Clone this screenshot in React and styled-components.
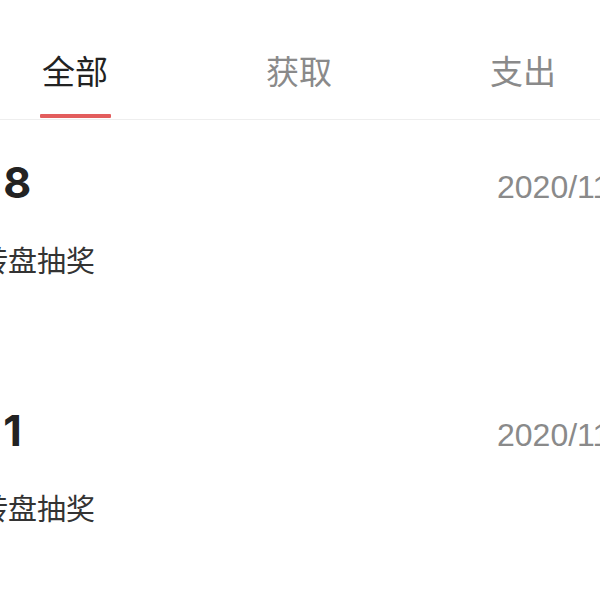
import React, { useState } from "react";
import styled, { createGlobalStyle } from "styled-components";

const GlobalStyle = createGlobalStyle`
  html, body { margin: 0; padding: 0; background: #fff; }
  body { font-family: "Noto Sans CJK SC", "Noto Sans", sans-serif; }
`;

const Viewport = styled.div`
  width: 600px;
  height: 600px;
  overflow: hidden;
  background: #fff;
`;

const Page = styled.div`
  width: 672px;
  margin-left: -37px;
`;

const TabBar = styled.div`
  display: flex;
  height: 119px;
  border-bottom: 1px solid #eeeeee;
`;

const Tab = styled.div`
  flex: 1;
  display: flex;
  flex-direction: column;
  align-items: center;
  padding-top: 54px;
  box-sizing: border-box;
  cursor: pointer;
`;

const TabLabel = styled.span`
  font-family: "Noto Sans CJK SC", sans-serif;
  font-size: 33px;
  line-height: 33px;
  color: ${(p) => (p.$active ? "#222222" : "#8a8a8a")};
`;

const Indicator = styled.span`
  margin-top: auto;
  margin-bottom: 1px;
  width: 71px;
  height: 4px;
  border-radius: 1px;
  background: ${(p) => (p.$active ? "#e35d5d" : "transparent")};
`;

const List = styled.div`
  display: flex;
  flex-direction: column;
`;

const Item = styled.div`
  display: flex;
  flex-direction: column;
  height: 248px;
  box-sizing: border-box;
  padding: 41px 0 0 11px;
`;

const TopLine = styled.div`
  display: flex;
  align-items: baseline;
`;

const Amount = styled.span`
  width: 523px;
  flex-shrink: 0;
  font-family: "Inter", "Liberation Sans", sans-serif;
  font-weight: 700;
  font-size: 43px;
  line-height: 43px;
  color: #222222;
`;

const DateText = styled.span`
  white-space: nowrap;
  font-family: "Liberation Sans", Arial, sans-serif;
  font-size: 32px;
  line-height: 32px;
  color: #8a8a8a;
`;

const Desc = styled.div`
  margin-top: 41px;
  font-family: "Noto Sans CJK SC", sans-serif;
  font-size: 29px;
  line-height: 29px;
  color: #333333;
  padding-left: 5px;
`;

const tabs = ["全部", "获取", "支出"];

const records = [
  { amount: "+8", date: "2020/11/20 10:23", desc: "转盘抽奖" },
  { amount: "+1", date: "2020/11/19 09:41", desc: "转盘抽奖" },
];

export default function App() {
  const [active, setActive] = useState(0);
  return (
    <>
      <GlobalStyle />
      <Viewport>
        <Page>
          <TabBar>
            {tabs.map((t, i) => (
              <Tab key={t} onClick={() => setActive(i)}>
                <TabLabel $active={i === active}>{t}</TabLabel>
                <Indicator $active={i === active} />
              </Tab>
            ))}
          </TabBar>
          <List>
            {records.map((r, i) => (
              <Item key={i}>
                <TopLine>
                  <Amount>{r.amount}</Amount>
                  <DateText>{r.date}</DateText>
                </TopLine>
                <Desc>{r.desc}</Desc>
              </Item>
            ))}
          </List>
        </Page>
      </Viewport>
    </>
  );
}
